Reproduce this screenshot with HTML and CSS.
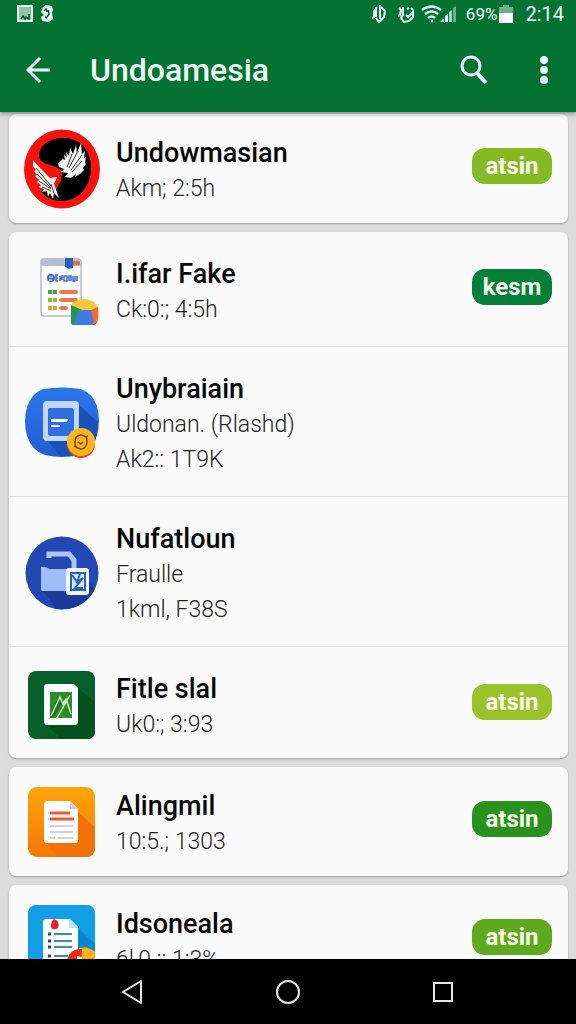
FILE: index.html
```html
<!DOCTYPE html>
<html lang="en">
<head>
  <meta charset="UTF-8" />
  <meta name="viewport" content="width=device-width, initial-scale=1.0"/>
  <title>Undoamesia</title>
  <link rel="stylesheet" href="styles.css">
</head>
<body>
  <header class="header">
    <div class="status">
      <svg width="38" height="18" viewBox="0 0 38 18">
        <path d="M2 1h14v15H2z" fill="#8fc4a4" stroke="#e6fff0" stroke-width="2"/>
        <path d="M5 14l2-3 2 3 1-2 3 2V9" fill="none" stroke="#07532a" stroke-width="1.5"/>
        <path d="M27 2l3-2 6 1 1 4-1 3 1 6-4 3-7-1-1-4 3-2-3-3z" fill="#e6fff0"/>
        <path d="M28 6l2-2 1 3M32 5l1 4-2 3M29 12l2 1" fill="none" stroke="#07532a" stroke-width="1.5"/>
      </svg>
      <div class="status-right">
        <svg width="86" height="20" viewBox="0 0 86 20" fill="none" stroke="#e6fff0" stroke-width="2">
          <path d="M6 3L3 7v6l-2 1M5 3v10M9 1v14M8 17l3-1M10 3l4 4-1 6-5 5-3-4"/>
          <path d="M28 4l2 2-1 5-2 1M32 3v8l-2 3 3 4 5-1 4-4V8l-5 5-2-2M36 5l2-1M40 4l2 2"/>
          <path d="M51 6q10-7 19 0M54 10q7-5 13 0M57 14q4-3 7 0M60 17h2" stroke-width="2.5"/>
          <g fill="#e6fff0" stroke="none">
            <path d="M69 18l4-4v4zM74 18v-6l3-2v8z"/>
            <path d="M78 18V8l3-2v12z" fill="#a6d4b8"/>
            <path d="M82 18V4l3-2v16z" fill="#6fae88"/>
          </g>
        </svg>
        <span class="battery-text">69%</span>
        <svg width="14" height="18" viewBox="0 0 14 18">
          <path d="M4 0h6v2h4v6H0V2h4z" fill="#6fae88"/>
          <path d="M0 8h14v10H0z" fill="#fff"/>
        </svg>
        <span class="time">2:14</span>
      </div>
    </div>
    <div class="appbar">
      <button class="icon-btn" aria-label="Back">
        <svg width="24" height="28" viewBox="0 0 24 28" fill="none" stroke="#f0fff6" stroke-width="3">
          <path d="M14 2L2 14l12 12M2 14h22"/>
        </svg>
      </button>
      <h1>Undoamesia</h1>
      <button class="icon-btn" aria-label="Search">
        <svg width="28" height="30" viewBox="0 0 28 30" fill="none" stroke="#f0fff6">
          <circle cx="11" cy="11" r="9" stroke-width="3"/>
          <path d="M17 18l9 10" stroke-width="4"/>
        </svg>
      </button>
      <button class="icon-btn menu" aria-label="More options">
        <svg width="8" height="28" viewBox="0 0 8 28" fill="#f0fff6">
          <circle cx="4" cy="4" r="4"/>
          <circle cx="4" cy="14" r="4"/>
          <circle cx="4" cy="24" r="4"/>
        </svg>
      </button>
    </div>
  </header>

  <main class="list">
    <section class="card">
      <article class="row">
        <svg class="icon" viewBox="0 0 76 80">
          <ellipse cx="38" cy="40" rx="38" ry="39.5" fill="#f5140c"/>
          <path d="M15 26C16 14 29 8 42 9c16 1 26 15 25 32-1 18-13 31-30 31-9 0-16-4-20-10l17-9 4-9c0-4-6-6-12-8-7-2-11-4-11-10z" fill="#000"/>
          <path d="M9 33l9 4 13 6 7-1-1 10-6 10-8 2z" fill="#f5140c"/>
          <g fill="#f3f3f3">
            <path d="M34 34l5-4 2 1-1-6 3 4-1-6 3 4 1-8 3 6 3-9 1 8 4-10 1 11 3-3-1 7 2-1-1 6 1 1-3 4 1 2-4 4-5 3 1-3-5 4-6-1 3-4-7-1 3-3-5-2z"/>
            <path d="M9 31l8 9 9 9 7-1-3 7 5 14-5-5-1 6-3-6-2 4-1-6-5 1 2-3-5-2 2-2-4-3 2-2-4-4 2-1-3-4 2-1-3-4z"/>
          </g>
          <path d="M43 38l5-13M45 39l9-17M47 41l11-15M48 43l10-11M12 39l15 18M13 45l14 14M15 52l12 8M18 58l9 4M27 55l3 9" stroke="#333" fill="none"/>
        </svg>
        <div class="text">
          <h2>Undowmasian</h2>
          <p>Akm; 2:5h</p>
        </div>
        <button class="btn lime">atsin</button>
      </article>
    </section>

    <section class="card group">
      <article class="row">
        <svg class="icon" viewBox="0 0 76 80">
          <rect x="17" y="9" width="40" height="57" rx="3" fill="#fdfdfe" stroke="#b4bac6" stroke-width="1.5"/>
          <path d="M17 16v-4q0-2 3-2l6-2h29l2 8z" fill="#b3bfd1"/>
          <path d="M49 11h7v4h-7z" fill="#e9694a"/>
          <path d="M41 8h8v10l-4 1-4-2z" fill="#2a5fc4"/>
          <circle cx="27" cy="28" r="4" fill="#3971c9"/>
          <path d="M25 27h4M25 30h3" stroke="#fff"/>
          <path d="M34 25h-2v6h2M32 28h2M36 31v-5l2 4v-5M43 26h-3v5h3zM45 31v-5h2v5M49 26v5h2v-5M53 31v-5" fill="none" stroke="#3971c9" stroke-width="1.5"/>
          <path d="M24 42h9" stroke="#38a34d" stroke-width="4" stroke-dasharray="4 1"/>
          <path d="M24 50h9" stroke="#91b72a" stroke-width="4" stroke-dasharray="4 1"/>
          <path d="M24 58h9" stroke="#d6a52a" stroke-width="4" stroke-dasharray="4 1"/>
          <path d="M37 42h15M37 50h15M37 58h5" stroke="#f1764f" stroke-width="4" stroke-linecap="round"/>
          <path d="M48 53q12-8 23 0l3 4-4 6H51l-4-6z" fill="#fbc638"/>
          <path d="M47 55l11 5-5 15h-4q-2 0-2-3z" fill="#239a48"/>
          <path d="M54 60h15l2 15H50z" fill="#4379e3"/>
          <path d="M67 60l7-3q1 11-1 16l-3 2z" fill="#ef6b32"/>
        </svg>
        <div class="text">
          <h2>I.ifar Fake</h2>
          <p>Ck:0:; 4:5h</p>
        </div>
        <button class="btn green">kesm</button>
      </article>
      <article class="row">
        <svg class="icon" viewBox="0 0 76 80">
          <defs>
            <linearGradient id="blue" x2="0" y2="1"><stop stop-color="#2c76ec"/><stop offset="1" stop-color="#205ed3"/></linearGradient>
          </defs>
          <path d="M19 6q19-3 38 0 12 5 16 17 4 15 0 29-5 15-18 20-17 4-34 0Q8 68 3 53-1 38 3 24 8 10 19 6z" fill="url(#blue)"/>
          <path d="M54 21l20 18q0 20-9 29l-10 5H36L23 57z" fill="#1a50bb"/>
          <rect x="19" y="18" width="36" height="40" rx="4" fill="#c3d6fc"/>
          <rect x="24" y="25" width="26" height="28" rx="2" fill="#2e70df"/>
          <path d="M27 36h17l-1 3H27zM27 42h9v2h-9z" fill="#fff"/>
          <circle cx="57" cy="61" r="14" fill="#df4b1d"/>
          <circle cx="57" cy="59" r="14" fill="#ffb51e"/>
          <path d="M51 59q0-7 6-7 7 1 6 7-1 7-6 7-7-1-6-7M50 63l3 2M62 54l2-1M54 59l3 2 2-2" fill="none" stroke="#7b4412" stroke-width="1.5"/>
        </svg>
        <div class="text">
          <h2>Unybraiain</h2>
          <p>Uldonan. (Rlashd)</p>
          <p>Ak2:: 1T9K</p>
        </div>
      </article>
      <article class="row">
        <svg class="icon" viewBox="0 0 76 80">
          <circle cx="38" cy="40" r="36.5" fill="#2348b3"/>
          <path d="M18 57l15 19q27 2 38-20l-8-9z" fill="#193c9c"/>
          <path d="M17 57V34h5l3 2h24v22H19q-2 0-2-1z" fill="#a0bdf8"/>
          <path d="M25 25v-4h20l5 6v11" fill="none" stroke="#adc6fc" stroke-width="5"/>
          <rect x="42" y="35" width="23" height="27" rx="3" fill="#f1f7ff"/>
          <path d="M47 40h14v17H47z" fill="#dbeaff" stroke="#2b63b9" stroke-width="2"/>
          <path d="M48 42l5 7 3-8M52 50l7-5-8 10h8" fill="none" stroke="#2b63b9" stroke-width="2"/>
        </svg>
        <div class="text">
          <h2>Nufatloun</h2>
          <p>Fraulle</p>
          <p>1kml, F38S</p>
        </div>
      </article>
      <article class="row">
        <svg class="icon" viewBox="0 0 76 80">
          <rect x="4" y="6" width="67" height="68" rx="8" fill="#075f2c"/>
          <path d="M53 22l18 15v29q0 8-8 8H37L22 59z" fill="#04531f"/>
          <path d="M23 19h27l4 4v33q0 4-3 4H23q-3 0-3-4V22q0-3 3-3z" fill="#fff"/>
          <path d="M26 27h22v26H26z" fill="#2d8c2c"/>
          <path d="M26 49l9-18 4 6-10 16h-3z" fill="#1b741f"/>
          <path d="M27 51l9-19 3 7 3-5 5 15M33 53l13-23" fill="none" stroke="#d5f2ca" stroke-width="1.5"/>
        </svg>
        <div class="text">
          <h2>Fitle slal</h2>
          <p>Uk0:; 3:93</p>
        </div>
        <button class="btn yellow">atsin</button>
      </article>
    </section>

    <section class="card">
      <article class="row">
        <svg class="icon" viewBox="0 0 76 80">
          <defs>
            <linearGradient id="orange" x2="0" y2="1"><stop stop-color="#ffa50b"/><stop offset="1" stop-color="#f57706"/></linearGradient>
          </defs>
          <rect x="4" y="5" width="67" height="70" rx="9" fill="url(#orange)"/>
          <path d="M54 30l17 15v21q0 9-9 9H33L22 61z" fill="#f37208"/>
          <path d="M24 19h22l8 8v31q0 3-3 3H23q-3 0-3-3V23q0-4 4-4z" fill="#fff"/>
          <path d="M46 19v8h8z" fill="#cfcfd2"/>
          <path d="M26 31h20M26 37h24" stroke="#ed5831" stroke-width="3"/>
          <path d="M26 44h23M26 50h23M26 56h5M34 56h15" stroke="#a7a7a7"/>
        </svg>
        <div class="text">
          <h2>Alingmil</h2>
          <p>10:5.; 1303</p>
        </div>
        <button class="btn leaf">atsin</button>
      </article>
    </section>

    <section class="card">
      <article class="row">
        <svg class="icon" viewBox="0 0 76 80">
          <rect x="4" y="5" width="67" height="70" rx="8" fill="#129ee5"/>
          <path d="M53 27l18 17v31H38z" fill="#0889cf"/>
          <path d="M22 19h24l8 8v39H19V22q0-3 3-3z" fill="#f8fdff"/>
          <path d="M45 18v10h9z" fill="#b6e3f5"/>
          <path d="M28 21q3-4 6 1 2 6-2 7-6 1-5-4z" fill="#ed2020"/>
          <path d="M24 34h3M24 41h3M24 47h3M24 56h3" stroke="#373e91" stroke-width="3"/>
          <path d="M30 34h18M30 41h18M30 47h18M30 56h14" stroke="#3c929c" stroke-width="2"/>
          <path d="M55 48q10-2 16 4v20H55z" fill="#fbb31c"/>
          <path d="M43 60q3-12 15-11l-1 23H43z" fill="#e42c17"/>
          <path d="M53 56l5 1v4h-5z" fill="#fff"/>
        </svg>
        <div class="text">
          <h2>Idsoneala</h2>
          <p>6l,0 :: 1:3%</p>
        </div>
        <button class="btn grass">atsin</button>
      </article>
    </section>
  </main>

  <nav class="navbar">
    <button class="icon-btn" aria-label="Back">
      <svg width="24" height="26" viewBox="0 0 24 26" fill="none" stroke="#e8e8e8" stroke-width="2">
        <path d="M21 2v22L3 13z" stroke-linejoin="round"/>
      </svg>
    </button>
    <button class="icon-btn" aria-label="Home">
      <svg width="26" height="26" viewBox="0 0 26 26" fill="none" stroke="#e8e8e8" stroke-width="2">
        <circle cx="13" cy="13" r="11"/>
      </svg>
    </button>
    <button class="icon-btn" aria-label="Recent apps">
      <svg width="22" height="22" viewBox="0 0 22 22" fill="none" stroke="#e8e8e8" stroke-width="2">
        <path d="M2 2h18v18H2z"/>
      </svg>
    </button>
  </nav>
</body>
</html>
```
FILE: styles.css
```css
* {
  box-sizing: border-box;
}

body {
  margin: 0;
  height: 100vh;
  display: flex;
  flex-direction: column;
  overflow: hidden;
  background: #dcdcdd;
  font-family: Roboto, "Liberation Sans", sans-serif;
}

h1, h2, p {
  margin: 0;
}

svg {
  display: block;
  flex: none;
}

button {
  border: none;
  padding: 0;
  font-family: inherit;
  cursor: pointer;
}

.header {
  background: #037233;
  color: #f0fff6;
  box-shadow: 0 1px 5px rgba(0, 0, 0, 0.5);
  z-index: 1;
}

.status {
  display: flex;
  justify-content: space-between;
  align-items: center;
  height: 28px;
  padding: 0 12px 0 16px;
}

.status-right {
  display: flex;
  align-items: center;
  font-size: 20px;
}

.battery-text {
  margin: 0 2px 0 9px;
  font-size: 17px;
}

.time {
  margin-left: 12px;
}

.appbar {
  display: flex;
  align-items: center;
  height: 84px;
  padding: 0 28px 0 26px;
}

.icon-btn {
  background: none;
}

.appbar h1 {
  flex: 1;
  margin-left: 40px;
  font-size: 32px;
  font-weight: 500;
}

.menu {
  margin-left: 52px;
}

.list {
  flex: 1;
  min-height: 0;
  overflow: hidden;
  display: flex;
  flex-direction: column;
  gap: 9px;
  padding: 2px 8px 0 9px;
}

.card {
  flex: none;
  background: #fafafa;
  border-radius: 7px;
  box-shadow: 0 1px 2px rgba(0, 0, 0, 0.3);
}

.row {
  display: flex;
  align-items: center;
  gap: 16px;
  padding: 22px 16px 17px 15px;
}

.group .row {
  padding-top: 25px;
  padding-bottom: 19px;
}

.group .row + .row {
  border-top: 1px solid #dfdfe0;
}

.group .row:last-child {
  padding-bottom: 16px;
}

/* icons are taller than the text, so they must not stretch the row */
.icon {
  width: 76px;
  height: 80px;
  margin: -8px 0 -4px;
}

.text {
  flex: 1;
}

.text h2 {
  font-size: 27px;
  line-height: 35px;
  font-weight: 500;
  color: #080808;
}

.text p {
  font-size: 23px;
  line-height: 35px;
  font-weight: 300;
  color: #222;
}

.btn {
  align-self: flex-start;
  width: 80px;
  height: 36px;
  margin-top: 12px;
  border-radius: 13px;
  color: #f8ffe8;
  font-size: 24px;
  line-height: 34px;
  font-weight: 700;
}

.lime {
  background: #86ba25;
}

.green {
  background: #05803a;
}

.yellow {
  background: #9bc12b;
}

.leaf {
  background: #29921f;
}

.grass {
  background: #5fa91f;
}

.navbar {
  display: flex;
  justify-content: center;
  align-items: center;
  gap: 131px;
  height: 65px;
  padding-right: 3px;
  background: #000;
}
```
